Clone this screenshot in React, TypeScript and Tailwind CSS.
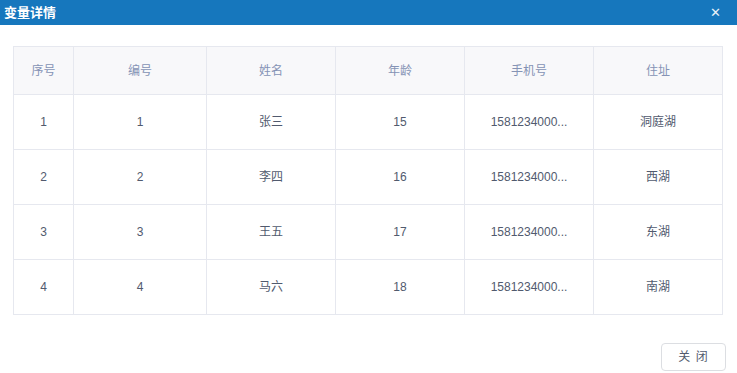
import React from "react";

const rows = [
  ["1", "1", "张三", "15", "1581234000...", "洞庭湖"],
  ["2", "2", "李四", "16", "1581234000...", "西湖"],
  ["3", "3", "王五", "17", "1581234000...", "东湖"],
  ["4", "4", "马六", "18", "1581234000...", "南湖"],
];
const heads = ["序号", "编号", "姓名", "年龄", "手机号", "住址"];
const widths = ["w-[60px]", "w-[133px]", "w-[129px]", "w-[129px]", "w-[129px]", "w-[129px]"];

export default function App() {
  return (
    <div
      className="w-[737px] h-[373px] bg-white flex flex-col"
      style={{ fontFamily: '"Liberation Sans", "Noto Sans CJK SC", sans-serif' }}
    >
      <div className="h-[25px] bg-[#1677bd] flex items-center justify-between pl-[4px] pr-[16px] text-white">
        <span className="text-[13px] font-bold">变量详情</span>
        <span className="text-[13px] leading-none text-[#e8f1f8]">✕</span>
      </div>
      <div className="pl-[13px] pt-[21px]">
        <table className="border-collapse table-fixed w-[710px] text-[12px]">
          <colgroup>
            {widths.map((w, i) => (
              <col key={i} className={w} />
            ))}
          </colgroup>
          <thead>
            <tr className="h-[48px] bg-[#f8f8fa]">
              {heads.map((h) => (
                <th key={h} className="border border-[#e6e8ef] font-normal text-[#8593b5] text-center">
                  {h}
                </th>
              ))}
            </tr>
          </thead>
          <tbody>
            {rows.map((r, i) => (
              <tr key={i} className="h-[55px]">
                {r.map((c, j) => (
                  <td key={j} className="border border-[#e6e8ef] text-center text-[#515a6e]">
                    {c}
                  </td>
                ))}
              </tr>
            ))}
          </tbody>
        </table>
      </div>
      <div className="flex justify-end pr-[11px] pt-[28px]">
        <button className="w-[65px] h-[28px] border border-[#dcdee2] rounded-[4px] text-[12px] tracking-[1px] text-[#515a6e] bg-white">
          关 闭
        </button>
      </div>
    </div>
  );
}
